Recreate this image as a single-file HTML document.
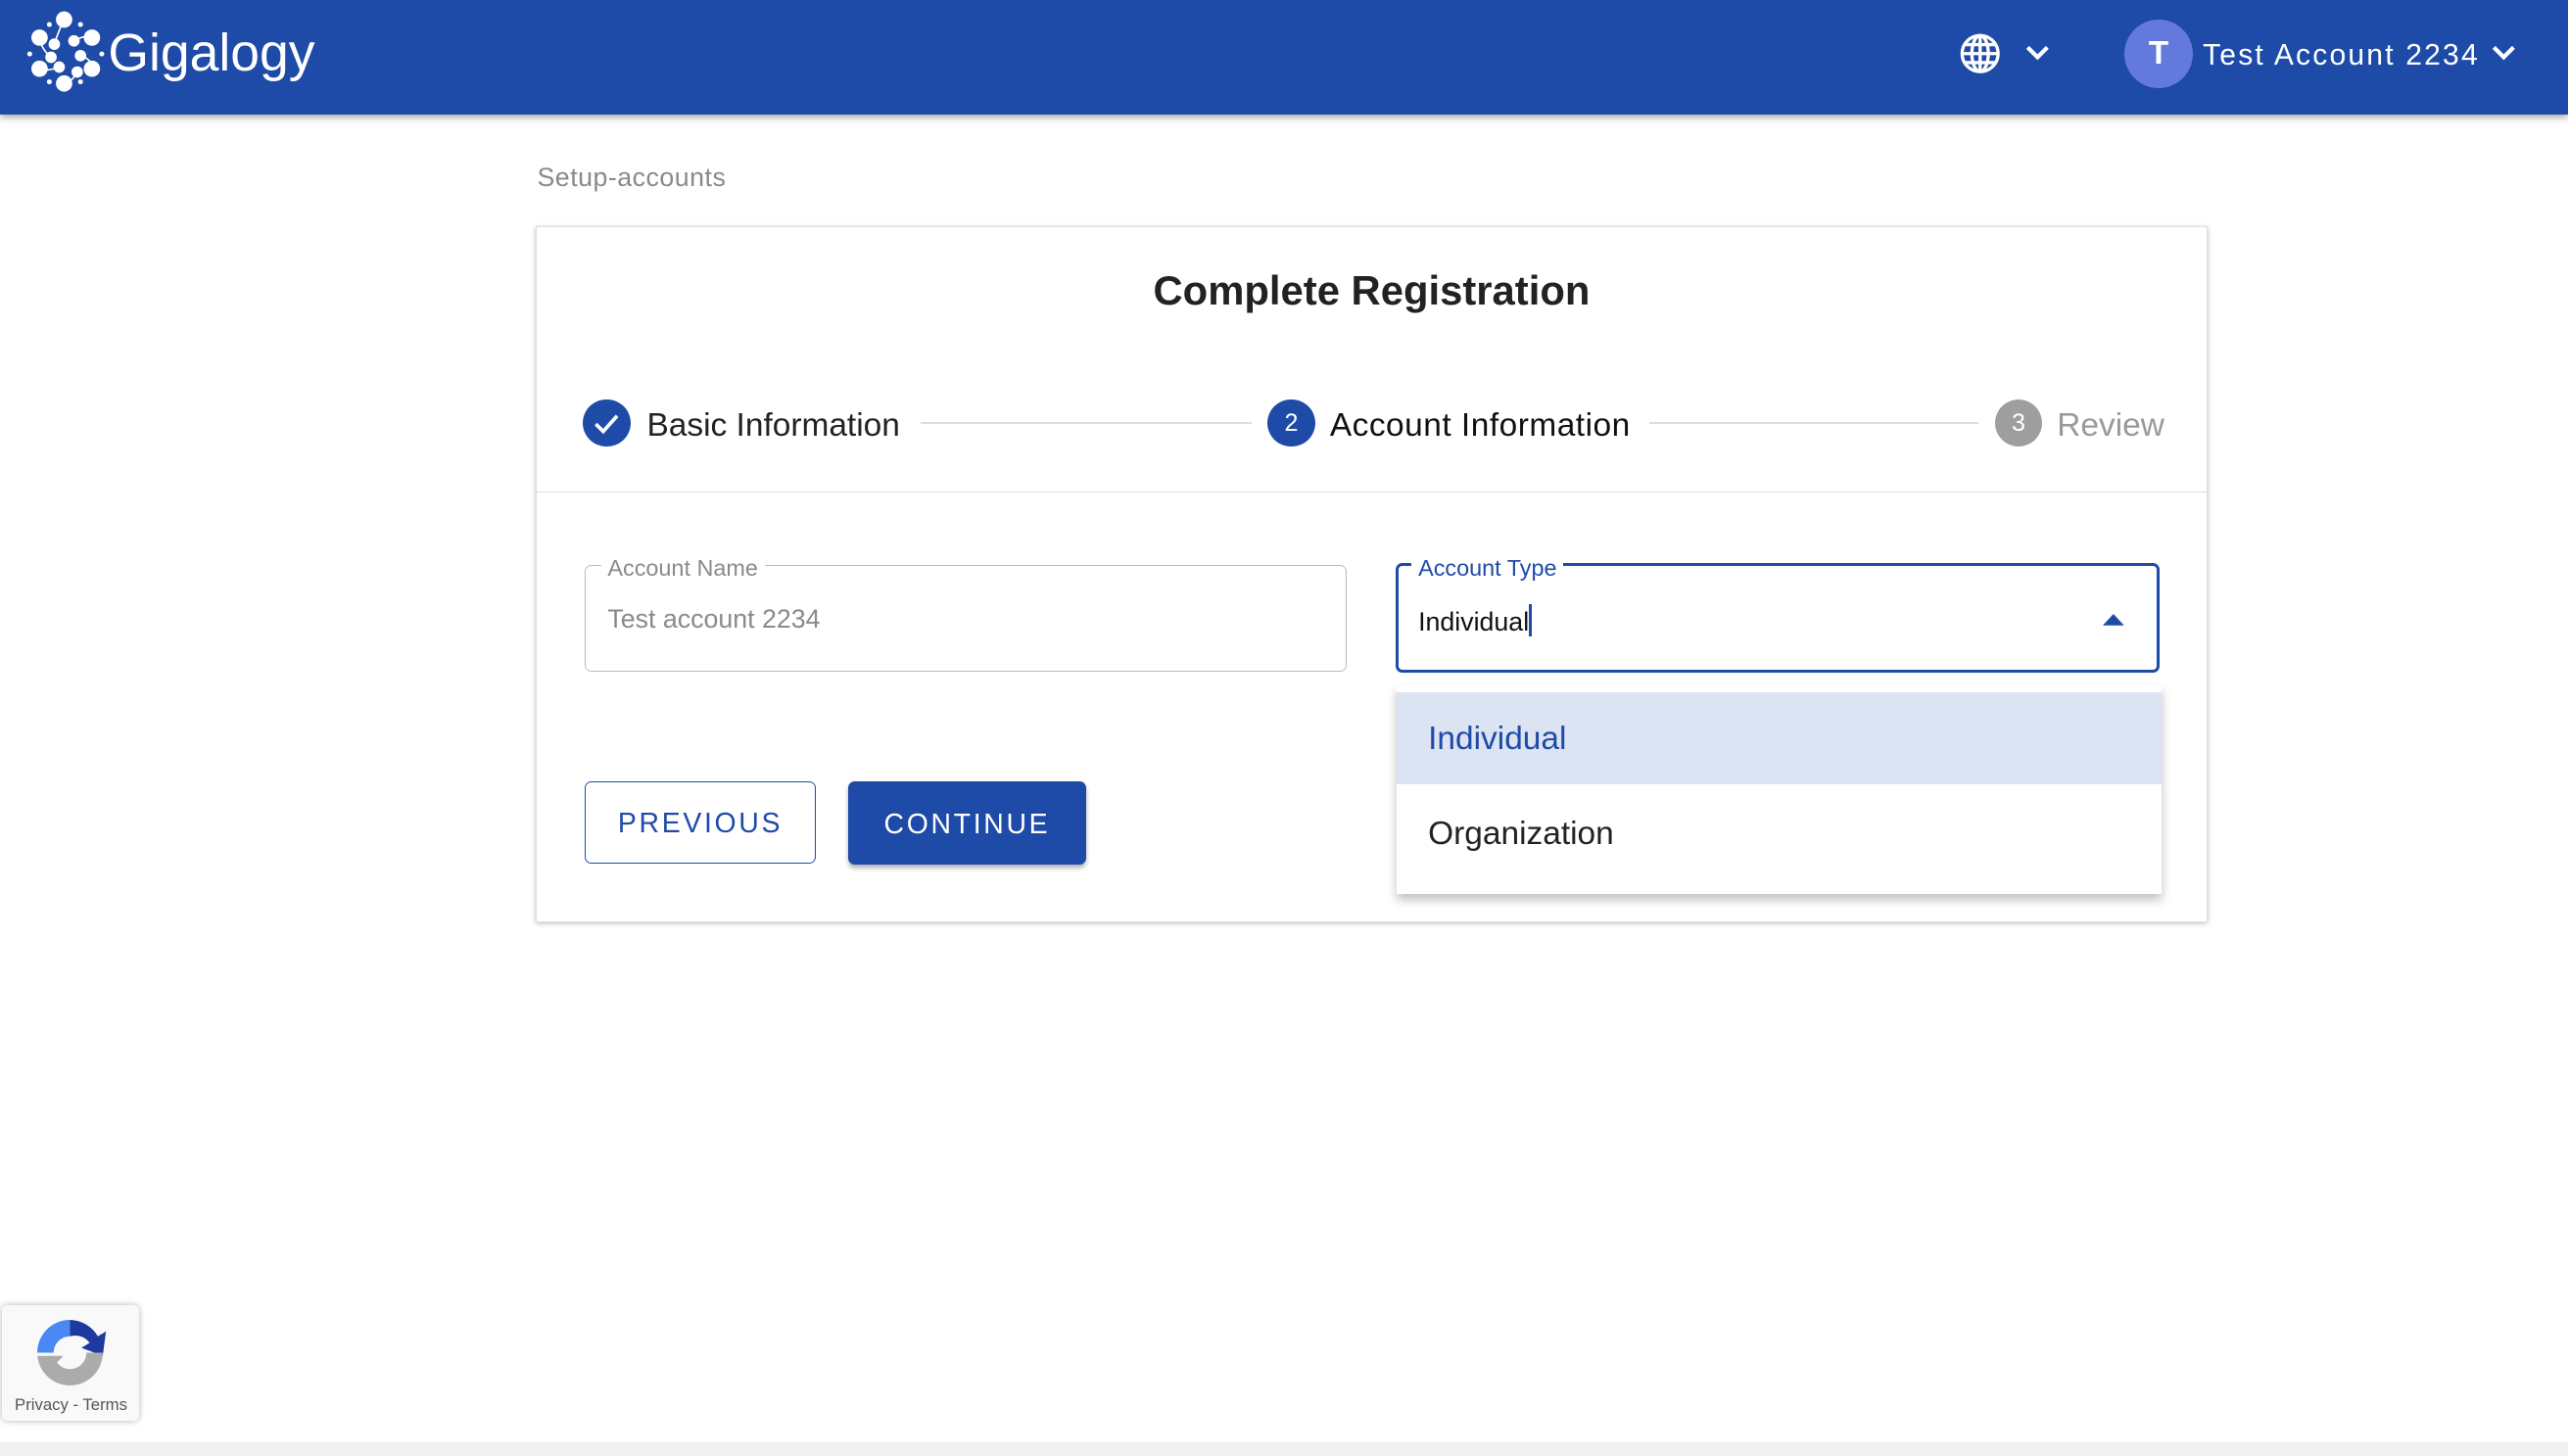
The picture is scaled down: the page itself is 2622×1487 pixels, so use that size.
<!DOCTYPE html>
<html><head><meta charset="utf-8"><style>
html,body{margin:0;padding:0;background:#fff;overflow:hidden}
#w{position:relative;width:1568px;height:889px;zoom:1.67219;font-family:"Liberation Sans",sans-serif;color:#222}
.a{position:absolute}
.hdr{left:0;top:0;width:1568px;height:70px;background:#1e4ba7;box-shadow:0 2px 4px rgba(0,0,0,.35)}
.card{left:327px;top:138px;width:1020px;height:424px;border:1px solid #ddd;box-shadow:0 1px 3px rgba(0,0,0,.25);background:#fff}
.circ{width:29px;height:29px;border-radius:50%;color:#fff;font-size:15px;text-align:center;line-height:29px}
.st{font-size:20px;top:247px;line-height:26px}
.line{height:1px;background:#ddd;top:258px}
.fs{border:1px solid #bbb;border-radius:4px}
.lbl{font-size:14px;background:#fff;padding:0 4px;line-height:16px}
.btn{font-size:17px;letter-spacing:1.6px;text-align:center;border-radius:4px;line-height:51px;height:51px}
</style></head><body><div id="w">
<div class="a hdr"></div>
<svg class="a" style="left:16px;top:6px" width="50" height="52" viewBox="0 0 50 52">
<g fill="#fff"><circle cx="23" cy="6" r="5"/><circle cx="8" cy="17" r="5"/><circle cx="40" cy="17" r="5"/><circle cx="8" cy="36" r="5"/><circle cx="40" cy="36" r="5"/><circle cx="23" cy="45" r="5"/><circle cx="17" cy="21" r="3.5"/><circle cx="29" cy="19" r="3.5"/><circle cx="33" cy="28" r="3.5"/><circle cx="31" cy="38" r="3.5"/><circle cx="20" cy="35" r="3.5"/><circle cx="15" cy="29" r="3.5"/><circle cx="14" cy="9" r="1.5"/><circle cx="33" cy="9" r="1.5"/><circle cx="2" cy="27" r="1.5"/><circle cx="46" cy="27" r="1.5"/><circle cx="14" cy="44" r="1.5"/><circle cx="33" cy="44" r="1.5"/></g>
<g stroke="#fff" stroke-width="1" fill="none"><path d="M17 21 Q20 12 23 6M29 19 Q36 15 40 17M33 28 Q40 30 40 36M31 38 Q28 44 23 45M20 35 Q12 38 8 36M15 29 Q9 24 8 17"/></g></svg>
<div class="a" style="left:66px;top:13px;font-size:32px;color:#fff;line-height:40px">Gigalogy</div>
<svg class="a" style="left:1196px;top:20px" width="26" height="26" viewBox="0 0 26 26" fill="none" stroke="#fff" stroke-width="2"><circle cx="13" cy="13" r="11"/><ellipse cx="13" cy="13" rx="5" ry="11"/><path d="M2 13h22M4 7.5h18M4 18.5h18M13 2v22"/></svg>
<svg class="a" style="left:1236px;top:27px" width="16" height="12" viewBox="0 0 16 12"><path d="M2 2l6 6 6-6" stroke="#fff" stroke-width="2.5" fill="none"/></svg>
<div class="a" style="left:1297px;top:12px;width:42px;height:42px;border-radius:50%;background:#6479dc;color:#fff;font-size:20px;font-weight:bold;text-align:center;line-height:42px">T</div>
<div class="a" style="left:1345px;top:22px;font-size:18px;color:#fff;letter-spacing:1.3px;line-height:24px">Test Account 2234</div>
<svg class="a" style="left:1521px;top:27px" width="16" height="12" viewBox="0 0 16 12"><path d="M2 2l6 6 6-6" stroke="#fff" stroke-width="2.5" fill="none"/></svg>

<div class="a" style="left:328px;top:99px;font-size:16px;color:#8a8a8a;letter-spacing:.3px">Setup-accounts</div>
<div class="a card"></div>
<div class="a" style="left:327px;width:1021px;top:163px;text-align:center;font-size:25px;font-weight:bold;color:#222">Complete Registration</div>

<div class="a circ" style="left:356px;top:244px;background:#1f4ba8"><svg width="29" height="29" viewBox="0 0 29 29"><path d="M8 15l4.5 4.5L21 10" stroke="#fff" stroke-width="2.2" fill="none"/></svg></div>
<div class="a st" style="left:395px">Basic Information</div>
<div class="a line" style="left:562px;width:202px"></div>
<div class="a circ" style="left:774px;top:244px;background:#1f4ba8">2</div>
<div class="a st" style="left:812px;color:#111;letter-spacing:.3px">Account Information</div>
<div class="a line" style="left:1007px;width:201px"></div>
<div class="a circ" style="left:1218px;top:244px;background:#9e9e9e">3</div>
<div class="a st" style="left:1256px;color:#999">Review</div>
<div class="a" style="left:328px;top:300px;width:1020px;height:1px;background:#ddd"></div>

<div class="a fs" style="left:357px;top:345px;width:464px;height:64px"></div>
<div class="a lbl" style="left:367px;top:339px;color:#8a8a8a">Account Name</div>
<div class="a" style="left:371px;top:369px;font-size:16px;color:#8a8a8a">Test account 2234</div>

<div class="a" style="left:852px;top:344px;width:463px;height:63px;border:2px solid #1f4ba8;border-radius:4px"></div>
<div class="a lbl" style="left:862px;top:339px;color:#1f4ba8">Account Type</div>
<div class="a" style="left:866px;top:369px;font-size:16px;color:#111">Individual<span style="display:inline-block;width:2px;height:20px;background:#1f4ba8;vertical-align:-4px"></span></div>
<svg class="a" style="left:1284px;top:375px" width="13" height="8" viewBox="0 0 13 8"><path d="M0 7L6.5 0 13 7z" fill="#1f4ba8"/></svg>

<div class="a" style="left:853px;top:418px;width:467px;height:128px;background:#fff;box-shadow:0 4px 6px rgba(0,0,0,.25)"></div>
<div class="a" style="left:853px;top:423px;width:467px;height:56px;background:#dce3f2"></div>
<div class="a" style="left:872px;top:440px;font-size:20px;color:#1f4ba8">Individual</div>
<div class="a" style="left:872px;top:498px;font-size:20px;color:#222">Organization</div>

<div class="a btn" style="left:357px;top:477px;width:140px;height:49px;line-height:51px;border:1px solid #1f4ba8;color:#1f4ba8">PREVIOUS</div>
<div class="a btn" style="left:518px;top:477px;width:145px;line-height:53px;background:#1f4ba8;color:#fff;box-shadow:0 2px 3px rgba(0,0,0,.3)">CONTINUE</div>

<div class="a" style="left:1px;top:797px;width:84px;height:71px;background:#f9f9f9;border-radius:3px;box-shadow:0 0 4px rgba(0,0,0,.3)"></div>
<svg class="a" style="left:20px;top:803px" width="46" height="46" viewBox="0 0 46 46">
<path d="M23 3A20 20 0 0 0 3 23h10a10 10 0 0 1 10-10z" fill="#4a89f3"/>
<path d="M23 3a20 20 0 0 1 17 10l5-3-2 15-13-5 5-3a11 11 0 0 0-12-4z" fill="#1e3aa0"/>
<path d="M3 23a20 20 0 0 0 40 0H33a10 10 0 0 1-18 6l4-4H3z" fill="#ababab"/></svg>
<div class="a" style="left:9px;top:852px;font-size:10px;color:#555">Privacy - Terms</div>
<div class="a" style="left:0;top:881px;width:1568px;height:8px;background:#f1f1f1"></div>
</div></body></html>
